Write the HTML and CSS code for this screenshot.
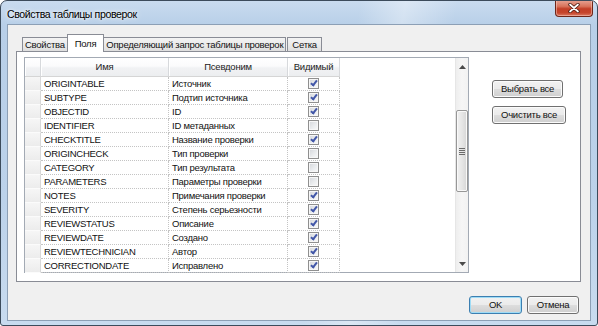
FILE: index.html
```html
<!DOCTYPE html>
<html lang="ru">
<head>
<meta charset="utf-8">
<title>Свойства таблицы проверок</title>
<link rel="stylesheet" href="styles.css">
</head>
<body>
<div class="window">
  <div class="titlebar">
    <span class="title">Свойства таблицы проверок</span>
    <div class="close-btn">
      <svg width="12" height="10" viewBox="0 0 12 10"><path d="M2 1.5 L10 8.5 M10 1.5 L2 8.5" stroke="#4a1a12" stroke-width="3.4" stroke-linecap="round"/><path d="M2 1.5 L10 8.5 M10 1.5 L2 8.5" stroke="#ffffff" stroke-width="1.7" stroke-linecap="round"/></svg>
    </div>
  </div>
  <div class="client">
    <div class="tabs">
      <div class="tab">Свойства</div>
      <div class="tab active">Поля</div>
      <div class="tab">Определяющий запрос таблицы проверок</div>
      <div class="tab last">Сетка</div>
    </div>
    <div class="panel">
      <div class="grid">
        <div class="grid-main">
          <div class="row head">
            <div class="c rh"></div>
            <div class="c name">Имя</div>
            <div class="c alias">Псевдоним</div>
            <div class="c vis">Видимый</div>
          </div>
          <div class="row"><div class="c rh"></div><div class="c name">ORIGINTABLE</div><div class="c alias">Источник</div><div class="c vis"><span class="cb on"></span></div></div>
          <div class="row"><div class="c rh"></div><div class="c name">SUBTYPE</div><div class="c alias">Подтип источника</div><div class="c vis"><span class="cb on"></span></div></div>
          <div class="row"><div class="c rh"></div><div class="c name">OBJECTID</div><div class="c alias">ID</div><div class="c vis"><span class="cb on"></span></div></div>
          <div class="row"><div class="c rh"></div><div class="c name">IDENTIFIER</div><div class="c alias">ID метаданных</div><div class="c vis"><span class="cb"></span></div></div>
          <div class="row"><div class="c rh"></div><div class="c name">CHECKTITLE</div><div class="c alias">Название проверки</div><div class="c vis"><span class="cb on"></span></div></div>
          <div class="row"><div class="c rh"></div><div class="c name">ORIGINCHECK</div><div class="c alias">Тип проверки</div><div class="c vis"><span class="cb"></span></div></div>
          <div class="row"><div class="c rh"></div><div class="c name">CATEGORY</div><div class="c alias">Тип результата</div><div class="c vis"><span class="cb"></span></div></div>
          <div class="row"><div class="c rh"></div><div class="c name">PARAMETERS</div><div class="c alias">Параметры проверки</div><div class="c vis"><span class="cb"></span></div></div>
          <div class="row"><div class="c rh"></div><div class="c name">NOTES</div><div class="c alias">Примечания проверки</div><div class="c vis"><span class="cb on"></span></div></div>
          <div class="row"><div class="c rh"></div><div class="c name">SEVERITY</div><div class="c alias">Степень серьезности</div><div class="c vis"><span class="cb on"></span></div></div>
          <div class="row"><div class="c rh"></div><div class="c name">REVIEWSTATUS</div><div class="c alias">Описание</div><div class="c vis"><span class="cb on"></span></div></div>
          <div class="row"><div class="c rh"></div><div class="c name">REVIEWDATE</div><div class="c alias">Создано</div><div class="c vis"><span class="cb on"></span></div></div>
          <div class="row"><div class="c rh"></div><div class="c name">REVIEWTECHNICIAN</div><div class="c alias">Автор</div><div class="c vis"><span class="cb on"></span></div></div>
          <div class="row"><div class="c rh"></div><div class="c name">CORRECTIONDATE</div><div class="c alias">Исправлено</div><div class="c vis"><span class="cb on"></span></div></div>
        </div>
        <div class="vscroll">
          <div class="arrow"><svg width="7" height="4" viewBox="0 0 7 4"><path d="M0 4 L3.5 0 L7 4 Z" fill="#4a4a4a"/></svg></div>
          <div class="track">
            <div class="thumb">
              <svg width="6" height="7" viewBox="0 0 6 7"><path d="M0 0.5 H6 M0 2.5 H6 M0 4.5 H6 M0 6.5 H6" stroke="#6b6b6b" stroke-width="1"/></svg>
            </div>
          </div>
          <div class="arrow"><svg width="7" height="4" viewBox="0 0 7 4"><path d="M0 0 L7 0 L3.5 4 Z" fill="#4a4a4a"/></svg></div>
        </div>
      </div>
      <div class="side">
        <button class="btn">Выбрать все</button>
        <button class="btn">Очистить все</button>
      </div>
    </div>
    <div class="footer">
      <button class="btn wide default">OK</button>
      <button class="btn wide">Отмена</button>
    </div>
  </div>
</div>
</body>
</html>
```

FILE: styles.css
```css
html, body {
  margin: 0;
  padding: 0;
  background: #ffffff;
}

body {
  font-family: "Liberation Sans", Arial, sans-serif;
  font-size: 9.5px;
  letter-spacing: -0.25px;
  color: #111;
}

.window {
  width: 598px;
  height: 326px;
  box-sizing: border-box;
  border: 1px solid #3c4b5b;
  border-radius: 7px 7px 3px 3px;
  background:
    linear-gradient(100deg, rgba(255,255,255,0) 55%, rgba(255,255,255,0.35) 62%, rgba(255,255,255,0) 70%),
    linear-gradient(180deg, #c9dbef 0px, #b8cfe8 24px, #bcd2ea 200px, #c8dbef 100%);
  display: flex;
  flex-direction: column;
  overflow: hidden;
}

.titlebar {
  height: 24px;
  flex: none;
  display: flex;
  align-items: center;
  padding-left: 6px;
  position: relative;
}

.title {
  font-size: 10.6px;
  letter-spacing: -0.4px;
  color: #000;
  text-shadow: 0 0 6px rgba(255,255,255,0.9), 0 0 3px rgba(255,255,255,0.9);
  margin-top: 1px;
}

.close-btn {
  position: absolute;
  top: -1px;
  right: 4px;
  width: 38px;
  height: 17px;
  box-sizing: border-box;
  border: 1px solid #6e2619;
  border-top: none;
  border-radius: 0 0 4px 4px;
  background: linear-gradient(180deg, #e8a596 0%, #d8735b 40%, #c23f27 55%, #c6452c 80%, #dc7a63 100%);
  box-shadow: inset 0 0 0 1px rgba(255,220,210,0.45);
  display: flex;
  align-items: center;
  justify-content: center;
}

.client {
  margin: 0 7px;
  height: 295px;
  flex: none;
  background: #f0f0f0;
  box-shadow: 0 0 0 1px #8c9fb5;
  display: flex;
  flex-direction: column;
}

/* Tabs */
.tabs {
  height: 17px;
  margin-top: 9px;
  padding-left: 14px;
  display: flex;
  align-items: flex-end;
}

.tab {
  height: 14px;
  box-sizing: border-box;
  border: 1px solid #898c95;
  border-bottom: none;
  padding: 0 2px;
  line-height: 13px;
  background: linear-gradient(180deg, #f3f3f3 0%, #ebebeb 50%, #dedede 100%);
  white-space: nowrap;
}

.tab + .tab {
  margin-left: 1px;
}

.tab.last {
  padding: 0 4px;
}

.tab.active {
  height: 18px;
  padding: 2px 7px 0;
  margin: 0 -1px -1px -1px;
  background: #ffffff;
  position: relative;
  z-index: 1;
}

.tab.active + .tab {
  margin-left: 0;
}

/* Panel */
.panel {
  margin-left: 8px;
  width: 565px;
  height: 231px;
  box-sizing: border-box;
  border: 1px solid #898c95;
  background: #ffffff;
  padding: 5px 0 0 7px;
  display: flex;
  align-items: flex-start;
}

.grid {
  width: 445px;
  height: 216px;
  box-sizing: border-box;
  border: 1px solid #a3aab4;
  display: flex;
  flex: none;
}

.grid-main {
  flex: 1;
  background: #ffffff;
}

.row {
  display: flex;
  height: 14px;
}

.c {
  box-sizing: border-box;
  height: 14px;
  line-height: 13px;
  border-right: 1px dotted #c4c4c4;
  border-bottom: 1px dotted #c4c4c4;
  white-space: nowrap;
  overflow: hidden;
}

.rh { width: 16px; }
.name { width: 128px; padding-left: 3px; }
.alias { width: 119px; padding-left: 3px; }
.vis {
  width: 52px;
  display: flex;
  align-items: center;
  justify-content: center;
}

.row:not(.head) .rh {
  background: linear-gradient(180deg, #f6f6f6 0%, #ececec 100%);
  border-right: 1px solid #d8d8d8;
  border-bottom: 1px solid #fbfbfb;
}

.row.head {
  height: 19px;
}

.row.head .c {
  height: 19px;
  line-height: 18px;
  text-align: center;
  padding: 0;
  background: linear-gradient(180deg, #ffffff 0%, #fbfbfc 45%, #f1f2f4 55%, #eceef0 100%);
  border-right: 1px solid #d7d9dc;
  border-bottom: 1px solid #d5d5d5;
  box-shadow: inset 1px 0 0 #ffffff;
  color: #222;
}

.row.head .vis {
  display: block;
}

/* Checkboxes */
.cb {
  width: 11px;
  height: 11px;
  box-sizing: border-box;
  border: 1px solid #8f8f8f;
  background: linear-gradient(135deg, #d4d6da 0%, #eceef0 60%, #fafafa 100%);
  box-shadow: inset 0 0 0 1px #f7f7f7;
  position: relative;
  margin-top: -1px;
}

.cb.on::after {
  content: "";
  position: absolute;
  left: 3px;
  top: 0px;
  width: 2px;
  height: 5px;
  border-right: 2px solid #4257a8;
  border-bottom: 2px solid #4257a8;
  transform: rotate(38deg);
}

/* Scrollbar */
.vscroll {
  width: 13px;
  flex: none;
  box-sizing: border-box;
  border-left: 1px solid #e6e6e6;
  background: linear-gradient(90deg, #eeeeee 0%, #f6f6f6 50%, #f2f2f2 100%);
  display: flex;
  flex-direction: column;
}

.arrow {
  height: 17px;
  display: flex;
  align-items: center;
  justify-content: center;
}

.track {
  flex: 1;
}

.thumb {
  margin-top: 35px;
  height: 82px;
  box-sizing: border-box;
  border: 1px solid #979797;
  border-radius: 2px;
  background: linear-gradient(90deg, #f0f0f0 0%, #e6e6e6 50%, #d6d6d6 100%);
  box-shadow: inset 0 0 0 1px #f9f9f9;
  display: flex;
  align-items: center;
  justify-content: center;
}

/* Buttons */
.btn {
  font-family: "Liberation Sans", Arial, sans-serif;
  font-size: 9.5px;
  letter-spacing: -0.25px;
  color: #111;
  height: 18px;
  box-sizing: border-box;
  padding: 0 8px;
  border: 1px solid #707070;
  border-radius: 3px;
  background: linear-gradient(180deg, #f2f2f2 0%, #ebebeb 48%, #dddddd 52%, #cfcfcf 100%);
  box-shadow: inset 0 0 0 1px #fbfbfb;
  line-height: 16px;
  white-space: nowrap;
}

.side {
  margin-left: 23px;
  margin-top: 23px;
  display: flex;
  flex-direction: column;
  align-items: flex-start;
  gap: 8px;
}

.footer {
  margin-top: 14px;
  padding-right: 11px;
  display: flex;
  justify-content: flex-end;
  gap: 5px;
}

.btn.wide {
  width: 52px;
  padding: 0;
}

.btn.default {
  width: 53px;
  border-color: #3c7fb1;
  box-shadow: inset 0 0 0 1px #9fdcf6;
}
```
